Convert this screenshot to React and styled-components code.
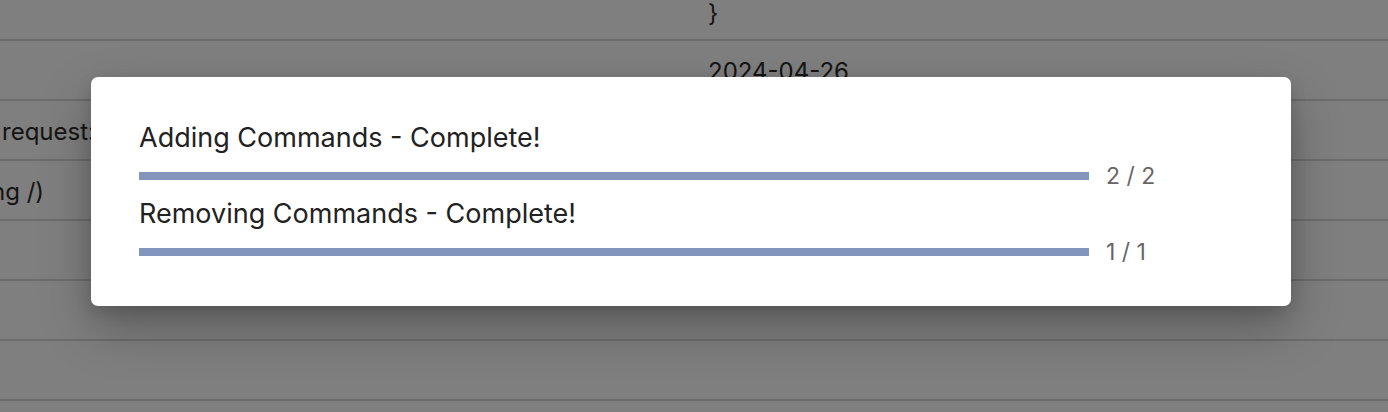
import React from 'react'
import styled, { createGlobalStyle } from 'styled-components'

const GlobalStyle = createGlobalStyle`
  html, body {
    margin: 0;
    padding: 0;
    background: #ffffff;
    overflow: hidden;
    font-family: Inter, "Noto Sans", sans-serif;
  }
`

const Page = styled.div`
  width: 1388px;
  height: 412px;
  overflow: hidden;
  position: relative;
`

const Table = styled.div`
  display: flex;
  flex-direction: column;
  margin-left: -92px;
`

const Row = styled.div`
  display: grid;
  grid-template-columns: 800px 1fr;
  height: ${p => (p.$first ? '39px' : '58px')};
  border-bottom: 2px solid #d9d9d9;
  align-items: ${p => (p.$first ? 'end' : 'start')};
  box-sizing: content-box;
`

const Cell = styled.div`
  font-size: 24px;
  line-height: 28px;
  color: #2a2a2a;
  white-space: nowrap;
  padding: ${p => (p.$first ? '0 0 12px' : '17px 0 0')};
`

const Overlay = styled.div`
  position: absolute;
  inset: 0;
  background: rgba(0, 0, 0, 0.5);
  padding: 77px 0 0 91px;
`

const Modal = styled.div`
  width: 1200px;
  box-sizing: border-box;
  background: #ffffff;
  border-radius: 7px;
  padding: 44px 48px 41px;
  display: flex;
  flex-direction: column;
  gap: 8px;
  box-shadow: 0 22px 50px rgba(0, 0, 0, 0.28), 0 6px 16px rgba(0, 0, 0, 0.12);
`

const Title = styled.div`
  font-size: 27px;
  line-height: 34px;
  color: #222222;
`

const ProgressRow = styled.div`
  display: flex;
  align-items: center;
  height: 26px;
`

const Track = styled.div`
  width: 950px;
  height: 8px;
  background: #e4e8f1;
`

const Fill = styled.div`
  height: 100%;
  background: #8296bd;
`

const Count = styled.div`
  margin-left: 17px;
  font-size: 23px;
  line-height: 26px;
  color: #666666;
`

const rows = [
  { left: '', right: '}', first: true },
  { left: '', right: '2024-04-26' },
  { left: 'Only on request:', right: '' },
  { left: '(a leading /)', right: '' },
  { left: '', right: '' },
  { left: '', right: '' },
  { left: '', right: '' },
]

const steps = [
  { label: 'Adding Commands', done: 2, total: 2 },
  { label: 'Removing Commands', done: 1, total: 1 },
]

const App = () => {
  return (
    <Page>
      <GlobalStyle />
      <Table>
        {rows.map((r, i) => (
          <Row key={i} $first={r.first}>
            <Cell $first={r.first}>{r.left}</Cell>
            <Cell $first={r.first}>{r.right}</Cell>
          </Row>
        ))}
      </Table>
      <Overlay>
        <Modal>
          {steps.map(s => (
            <React.Fragment key={s.label}>
              <Title>{s.label} - {s.done === s.total ? 'Complete!' : 'Running...'}</Title>
              <ProgressRow>
                <Track>
                  <Fill style={{ width: `${(s.done / s.total) * 100}%` }} />
                </Track>
                <Count>{s.done} / {s.total}</Count>
              </ProgressRow>
            </React.Fragment>
          ))}
        </Modal>
      </Overlay>
    </Page>
  )
}

export default App
